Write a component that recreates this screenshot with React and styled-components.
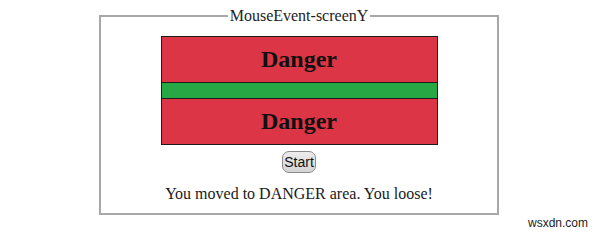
import React from "react";
import styled, { createGlobalStyle } from "styled-components";

const GlobalStyle = createGlobalStyle`
  html, body {
    margin: 0;
    padding: 0;
    background: #ffffff;
  }
  body {
    font-family: "Liberation Serif", "Times New Roman", serif;
    color: #1a1a1a;
  }
`;

const Page = styled.div`
  position: relative;
  width: 600px;
  height: 232px;
  padding-top: 7px;
  box-sizing: border-box;
  overflow: hidden;
`;

const Frame = styled.fieldset`
  width: 400px;
  box-sizing: border-box;
  margin: 0 0 0 99px;
  padding: 11px 0 10px;
  border: 2px solid #a8a8a8;
  display: flex;
  flex-direction: column;
  align-items: center;
`;

const Title = styled.legend`
  margin: 0 auto;
  padding: 0 2px;
  font-size: 16px;
  line-height: 18px;
  color: #222;
`;

const Board = styled.div`
  width: 277px;
  box-sizing: border-box;
  border: 1px solid #1c1c1c;
  display: flex;
  flex-direction: column;
`;

const Zone = styled.div`
  height: ${(p) => (p.$tone === "safe" ? "15px" : "45px")};
  background: ${(p) => (p.$tone === "safe" ? "#28a745" : "#dc3545")};
  & + & {
    border-top: 1px solid #1c1c1c;
  }
  display: flex;
  align-items: center;
  justify-content: center;
  font-size: 24px;
  font-weight: bold;
  color: #111;
`;

const StartButton = styled.button`
  margin-top: 6px;
  width: 34px;
  height: 22px;
  padding: 0;
  font-family: "Liberation Sans", Arial, sans-serif;
  font-size: 14px;
  color: #111;
  background: linear-gradient(#ededed, #d4d4d4);
  border: 1px solid #8a8a8a;
  border-radius: 7px;
`;

const Message = styled.p`
  margin: 12px 0 0;
  font-size: 16px;
  line-height: 18px;
  color: #1a1a1a;
`;

const Watermark = styled.span`
  position: absolute;
  right: 12px;
  bottom: 2px;
  font-family: "Liberation Sans", Arial, sans-serif;
  font-size: 12px;
  color: #222;
`;

export default function App() {
  return (
    <Page>
      <GlobalStyle />
      <Frame>
        <Title>MouseEvent-screenY</Title>
        <Board>
          <Zone $tone="danger">Danger</Zone>
          <Zone $tone="safe" />
          <Zone $tone="danger">Danger</Zone>
        </Board>
        <StartButton>Start</StartButton>
        <Message>You moved to DANGER area. You loose!</Message>
      </Frame>
      <Watermark>wsxdn.com</Watermark>
    </Page>
  );
}
